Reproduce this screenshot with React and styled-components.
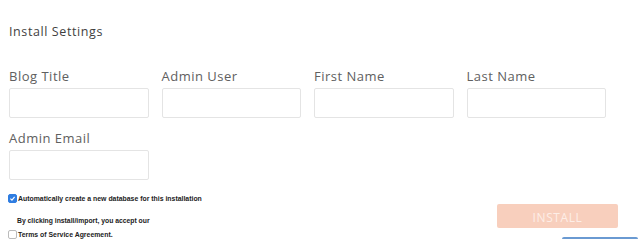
import styled, { createGlobalStyle } from 'styled-components'

const Global = createGlobalStyle`
  html, body { margin: 0; padding: 0; background: #fff; }
  body { font-family: "Open Sans", "Liberation Sans", sans-serif; overflow: hidden; }
`

const Page = styled.div`
  width: 640px;
  height: 239px;
  position: relative;
  overflow: hidden;
  padding: 24px 0 0 9px;
  box-sizing: border-box;
`

const Title = styled.h2`
  margin: 0;
  font-size: 12.5px;
  font-weight: 400;
  color: #3f3f3f;
  letter-spacing: 0.6px;
  line-height: 16px;
`

const Grid = styled.div`
  display: grid;
  grid-template-columns: repeat(4, 139.5px);
  column-gap: 13px;
  row-gap: 12px;
  margin-top: 28px;
`

const Field = styled.div`
  display: flex;
  flex-direction: column;
  gap: 3px;
`

const Label = styled.label`
  font-size: 13px;
  color: #606060;
  line-height: 17px;
  letter-spacing: 0.5px;
`

const Input = styled.input`
  width: 139.5px;
  height: 30px;
  box-sizing: border-box;
  border: 1px solid #e4e4e4;
  border-radius: 2px;
  background: #fff;
  outline: none;
`

const Bottom = styled.div`
  display: flex;
  justify-content: space-between;
  margin-top: 12px;
`

const Checks = styled.div`
  display: flex;
  flex-direction: column;
  margin-left: -1px;
  font-family: "Liberation Sans", Arial, sans-serif;
`

const CheckRow = styled.label`
  display: flex;
  align-items: center;
  font-size: 6.9px;
  font-weight: 700;
  color: #222;
  height: 11px;
  margin-top: ${p => (p.first ? '1px' : '0')};
`

const Box = styled.span`
  width: 9px;
  height: 9px;
  box-sizing: border-box;
  border-radius: 2px;
  border: 1px solid ${p => (p.checked ? '#2f7de1' : '#bbb')};
  background: ${p => (p.checked ? '#2f7de1' : '#fff')};
  display: inline-flex;
  align-items: center;
  justify-content: center;
  margin-right: 1px;
`

const Note = styled.p`
  margin: 12px 0 3px 9px;
  font-size: 6.8px;
  font-weight: 700;
  color: #222;
  line-height: 10px;
`

const Install = styled.button`
  width: 121px;
  height: 24px;
  margin: 12px 22px 0 0;
  border: none;
  border-radius: 2px;
  background: #f8cfbd;
  color: #fdeee7;
  font-family: "Open Sans", "Liberation Sans", sans-serif;
  font-size: 12px;
  letter-spacing: 0.6px;
  padding: 2px 0 0;
`

const BlueEdge = styled.div`
  position: absolute;
  left: 562px;
  bottom: 0;
  width: 76px;
  height: 2px;
  background: #6a9ad2;
  border-radius: 2px 2px 0 0;
`

const fields = ['Blog Title', 'Admin User', 'First Name', 'Last Name', 'Admin Email']

export default function App() {
  return (
    <Page>
      <Global />
      <Title>Install Settings</Title>
      <Grid>
        {fields.map(f => (
          <Field key={f}>
            <Label>{f}</Label>
            <Input type="text" />
          </Field>
        ))}
      </Grid>
      <Bottom>
        <Checks>
          <CheckRow first>
            <Box checked>
              <svg width="7" height="7" viewBox="0 0 10 10">
                <path d="M2 5.2 L4.2 7.4 L8 2.6" fill="none" stroke="#fff" strokeWidth="1.6" />
              </svg>
            </Box>
            Automatically create a new database for this installation
          </CheckRow>
          <Note>By clicking install/import, you accept our</Note>
          <CheckRow>
            <Box />
            Terms of Service Agreement.
          </CheckRow>
        </Checks>
        <Install>INSTALL</Install>
      </Bottom>
      <BlueEdge />
    </Page>
  )
}
